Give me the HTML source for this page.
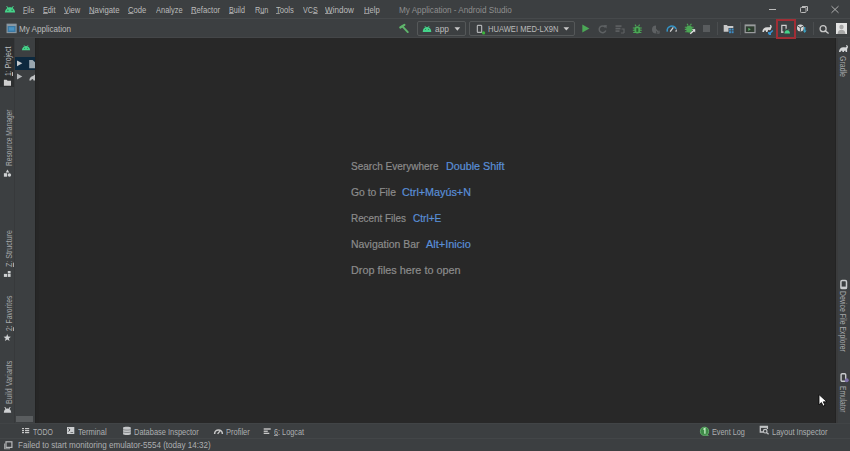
<!DOCTYPE html>
<html><head><meta charset="utf-8">
<style>
*{margin:0;padding:0;box-sizing:border-box}
html,body{width:850px;height:451px;overflow:hidden;background:#3c3f41;font-family:"Liberation Sans",sans-serif;color:#bbbbbb}
.abs{position:absolute}
.t{position:absolute;white-space:nowrap;transform-origin:0 0}
.hs{-webkit-text-stroke:0.2px currentColor}
.t u{text-decoration:underline;text-underline-offset:0px;text-decoration-thickness:1px;text-decoration-color:rgba(187,187,187,0.7)}
.v{position:absolute;width:0;height:0;transform-origin:0 0;white-space:nowrap}
.v u{text-decoration:underline;text-decoration-thickness:1px}
svg{position:absolute;overflow:visible}
</style></head><body>
<div class="abs" style="left:0;top:0;width:850px;height:18px;background:#3c3f41"></div>
<div class="abs" style="left:0;top:18px;width:850px;height:1px;background:#46494b"></div>
<div class="abs" style="left:0;top:19px;width:850px;height:19px;background:#3c3f41"></div>
<div class="abs" style="left:0;top:37px;width:850px;height:1px;background:#444648"></div>
<!-- left strip -->
<div class="abs" style="left:0;top:38px;width:15px;height:385px;background:#3c3f41"></div>
<div class="abs" style="left:0;top:38px;width:15px;height:49px;background:#2d2f30"></div>
<div class="abs" style="left:14px;top:38px;width:1px;height:385px;background:#37393b"></div>
<!-- project panel -->
<div class="abs" style="left:15px;top:38px;width:20px;height:385px;background:#3c3f41"></div>
<div class="abs" style="left:15px;top:57px;width:20px;height:13px;background:#0d293e"></div>
<div class="abs" style="left:16px;top:416px;width:17px;height:6px;background:#5a5d5f"></div>
<!-- editor -->
<div class="abs" style="left:35px;top:38px;width:800px;height:385px;background:#282828"></div>
<div class="abs" style="left:35px;top:38px;width:1px;height:385px;background:#222222"></div>
<div class="abs" style="left:36px;top:38px;width:3px;height:385px;background:#262626"></div>
<!-- right strip -->
<div class="abs" style="left:835px;top:38px;width:15px;height:385px;background:#3c3f41"></div>
<div class="abs" style="left:835px;top:38px;width:1px;height:385px;background:#232323"></div>
<div class="abs" style="left:836px;top:38px;width:2px;height:385px;background:#3a3b3c"></div>
<!-- bottom -->
<div class="abs" style="left:0;top:423px;width:850px;height:15px;background:#3c3f41"></div>
<div class="abs" style="left:0;top:438px;width:850px;height:13px;background:#3c3f41"></div>
<div class="abs" style="left:0;top:438px;width:850px;height:1px;background:#434648"></div>
<div class="abs" style="left:0;top:423px;width:850px;height:1px;background:#414446"></div>
<!-- android logo menubar -->
<svg style="left:0;top:0" width="20" height="18" viewBox="0 0 20 18">
 <path d="M4.9 12.6 C5.1 9.2 7.4 7.3 10 7.3 C12.6 7.3 14.9 9.2 15.1 12.6 Z" fill="#45d38a"/>
 <path d="M6.6 6 L7.9 8.2 M13.4 6 L12.1 8.2" stroke="#45d38a" stroke-width="0.9"/>
 <circle cx="7.9" cy="10.3" r="0.7" fill="#2e6e4a"/><circle cx="12.1" cy="10.3" r="0.7" fill="#2e6e4a"/>
</svg>
<!-- window controls -->
<div class="abs" style="left:769px;top:9px;width:7px;height:1px;background:#bbbbbb"></div>
<svg style="left:800px;top:6px" width="9" height="7" viewBox="0 0 9 7">
 <rect x="0.5" y="1.5" width="5.5" height="5" fill="none" stroke="#bbbbbb" stroke-width="1" rx="0.8"/>
 <path d="M2 0.5 H7.5 V5" fill="none" stroke="#bbbbbb" stroke-width="1"/>
</svg>
<svg style="left:831px;top:6px" width="8" height="7" viewBox="0 0 8 7">
 <path d="M0.5 0.2 L7.5 6.8 M7.5 0.2 L0.5 6.8" stroke="#bbbbbb" stroke-width="0.9"/>
</svg>
<!-- project window icon in toolbar -->
<svg style="left:6px;top:23px" width="11" height="10" viewBox="0 0 11 10">
 <rect x="1.1" y="1.2" width="9" height="8.4" fill="#3a78a3" stroke="#8d9aa3" stroke-width="1.1"/>
 <rect x="1.1" y="1.2" width="9" height="1.8" fill="#8d9aa3"/>
 <rect x="3" y="4.2" width="5.2" height="3.4" fill="#4a93c2"/>
</svg>
<!-- hammer -->
<svg style="left:399px;top:24px" width="11" height="10" viewBox="0 0 11 10">
 <path d="M1.3 3.5 L5.4 0.8" stroke="#5fb56c" stroke-width="2.2" stroke-linecap="round"/>
 <path d="M3.4 2.3 L8.8 8.1" stroke="#5fb56c" stroke-width="1.9" stroke-linecap="round"/>
</svg>
<!-- app combo -->
<div class="abs" style="left:417px;top:21px;width:49px;height:15px;border:1px solid #555859;border-radius:2px"></div>
<svg style="left:422px;top:25px" width="10" height="8" viewBox="0 0 10 8">
 <path d="M0.7 6.9 C0.8 3.9 2.6 2.1 5 2.1 C7.4 2.1 9.2 3.9 9.3 6.9 Z" fill="#45d38a"/>
 <path d="M2.9 1 L3.6 2.3 M7.1 1 L6.4 2.3" stroke="#45d38a" stroke-width="0.8"/>
 <circle cx="3.5" cy="4.6" r="0.5" fill="#2e6e4a"/><circle cx="6.5" cy="4.6" r="0.5" fill="#2e6e4a"/>
</svg>
<svg style="left:454px;top:27px" width="7" height="4" viewBox="0 0 7 4"><path d="M0.5 0.3 H6.2 L3.35 3.7 Z" fill="#c9c9c9"/></svg>
<!-- device combo -->
<div class="abs" style="left:469px;top:21px;width:106px;height:15px;border:1px solid #555859;border-radius:2px"></div>
<svg style="left:476px;top:24px" width="10" height="11" viewBox="0 0 10 11">
 <rect x="1.35" y="1.4" width="4.3" height="7" rx="0.6" fill="none" stroke="#afb1b3" stroke-width="1.2"/>
 <circle cx="7.6" cy="8.9" r="1.6" fill="#3cb53c"/>
</svg>
<svg style="left:563px;top:27px" width="7" height="4" viewBox="0 0 7 4"><path d="M0.5 0.2 H6.2 L3.35 3.5 Z" fill="#c9c9c9"/></svg>
<!-- run -->
<svg style="left:582px;top:24px" width="8" height="9" viewBox="0 0 8 9"><path d="M0.3 0.5 L7.4 4.6 L0.3 8.6 Z" fill="#4ba756"/></svg>
<!-- rerun gray -->
<svg style="left:598px;top:24px" width="10" height="10" viewBox="0 0 10 10">
 <path d="M7.3 3.2 A3.4 3.4 0 1 0 7.8 6.5" fill="none" stroke="#5e6163" stroke-width="1.5"/>
 <path d="M5.2 1.2 L8.8 0.9 L8.5 4.5 Z" fill="#5e6163"/>
</svg>
<!-- apply changes gray -->
<svg style="left:615px;top:25px" width="10" height="9" viewBox="0 0 10 9">
 <rect x="0.5" y="0.3" width="6" height="1.6" fill="#5e6163"/>
 <rect x="0.5" y="2.8" width="5" height="1.6" fill="#5e6163"/>
 <rect x="0.5" y="5.3" width="4" height="1.6" fill="#5e6163"/>
 <path d="M6.5 4 L9 4 L9 8 M6 8 L9 8" stroke="#5e6163" stroke-width="1.2" fill="none"/>
</svg>
<!-- debug bug green -->
<svg style="left:632px;top:24px" width="11" height="10" viewBox="0 0 11 10">
 <ellipse cx="5.3" cy="5.8" rx="3" ry="3.6" fill="#4ba756"/>
 <path d="M0.8 4 H9.8 M0.8 6.2 H9.8 M1.2 8.5 H9.4 M3 0.6 L4 2.2 M7.6 0.6 L6.6 2.2" stroke="#4ba756" stroke-width="1.1"/>
 <rect x="4.3" y="4.2" width="2" height="3.6" fill="#2a5c30"/>
</svg>
<!-- attach debugger gray -->
<svg style="left:650px;top:25px" width="10" height="9" viewBox="0 0 10 9">
 <path d="M6 0.5 A4 4 0 1 0 6 8.5 Z" fill="#5e6163"/>
 <path d="M4 2.5 L8.5 7.5" stroke="#5e6163" stroke-width="1.3"/>
 <path d="M6.5 8 L9.2 8.3 L9 5.6" stroke="#5e6163" stroke-width="1" fill="none"/>
</svg>
<!-- profiler gauge -->
<svg style="left:666px;top:24px" width="12" height="9" viewBox="0 0 12 9">
 <path d="M1.3 7.6 A4.6 4.6 0 0 1 10.1 5" fill="none" stroke="#3592c4" stroke-width="1.6"/>
 <path d="M4.2 7.6 L7.3 3.3" stroke="#d5d5d5" stroke-width="1.3"/>
 <path d="M9.1 7.6 L10.4 4.9 L11 7.6 Z" fill="#d5d5d5"/>
</svg>
<!-- bug with arrow -->
<svg style="left:684px;top:23px" width="12" height="12" viewBox="0 0 12 12">
 <ellipse cx="5.2" cy="6" rx="3" ry="3.6" fill="#4ba756"/>
 <path d="M0.8 4.2 H9.6 M0.8 6.4 H9.6 M1.2 8.8 H8.5 M3 0.8 L4 2.4 M7.4 0.8 L6.4 2.4" stroke="#4ba756" stroke-width="1.1"/>
 <path d="M6.2 10.8 L10.8 6.8" stroke="#e0e0e0" stroke-width="1.4"/>
 <path d="M8 6.3 L11.2 6.3 L11.2 9.5 Z" fill="#e0e0e0"/>
</svg>
<!-- stop -->
<div class="abs" style="left:703px;top:25px;width:7px;height:7px;background:#595c5e"></div>
<!-- separators -->
<div class="abs" style="left:717px;top:22px;width:1px;height:13px;background:#4a4d4f"></div>
<div class="abs" style="left:740px;top:22px;width:1px;height:13px;background:#4a4d4f"></div>
<div class="abs" style="left:813px;top:22px;width:1px;height:13px;background:#4a4d4f"></div>
<!-- project structure -->
<svg style="left:723px;top:24px" width="12" height="10" viewBox="0 0 12 10">
 <path d="M0.7 1 H3.8 L4.8 2 H10.3 V7.8 H0.7 Z" fill="#c8c8c8"/>
 <rect x="5.5" y="4" width="5.5" height="5.5" fill="#3c3f41"/>
 <rect x="6" y="4.5" width="2" height="2" fill="#3d8ac2"/><rect x="8.6" y="4.5" width="2" height="2" fill="#3d8ac2"/>
 <rect x="6" y="7.2" width="2" height="2" fill="#3d8ac2"/><rect x="8.6" y="7.2" width="2" height="2" fill="#3d8ac2"/>
</svg>
<!-- console window -->
<svg style="left:744px;top:24px" width="12" height="10" viewBox="0 0 12 10">
 <rect x="1.2" y="1" width="9.8" height="7.6" fill="#2f3d30" stroke="#9a9c9e" stroke-width="1.2"/>
 <rect x="1.2" y="1" width="9.8" height="1.3" fill="#9a9c9e"/>
 <path d="M4.3 3.7 L6.8 5.3 L4.3 6.9 Z" fill="#5cad6a"/>
</svg>
<!-- gradle sync elephant w/ arrow -->
<svg style="left:762px;top:24px" width="12" height="11" viewBox="0 0 12 11">
 <path d="M0.4 8 C0.4 5 2.4 3.2 5 3.2 C6.5 3.2 7.4 3.5 8 2.9 C8.5 2.4 8.3 1.6 7.7 1.7 L8.1 0.7 C9.8 0.8 10.3 2.9 9.2 4.2 C8.9 4.6 8.8 5.3 8.8 5.8 L7.3 6.3 L6.2 5.7 L5.4 8 H4 L3.9 6.6 L2.4 6.6 L2 8 Z" fill="#d8d8d8"/>
 <path d="M6.8 10.3 L10.8 6.6 M6.8 10.3 V8 M6.8 10.3 H9" stroke="#3a9ad9" stroke-width="1.4" fill="none"/>
</svg>
<!-- red box -->
<div class="abs" style="left:776px;top:19px;width:20px;height:20px;border:2px solid #a02e35"></div>
<!-- device manager -->
<svg style="left:780px;top:24px" width="12" height="11" viewBox="0 0 12 11">
 <path d="M3.6 8.1 H1.8 V1.3 H6.1 V4.8" fill="none" stroke="#d0d0d0" stroke-width="1.2"/>
 <circle cx="2" cy="8.2" r="0.8" fill="#d0d0d0"/>
 <path d="M4.4 9.4 C4.6 7.5 5.8 6.3 7.2 6.3 C8.6 6.3 9.8 7.5 10 9.4 Z" fill="#45d38a"/>
 <path d="M5.6 5.5 L6.2 6.5 M8.8 5.5 L8.2 6.5" stroke="#45d38a" stroke-width="0.7"/>
</svg>
<!-- sdk manager -->
<svg style="left:796px;top:24px" width="12" height="11" viewBox="0 0 12 11">
 <circle cx="4.4" cy="3.9" r="3.4" fill="#d8d8d8"/>
 <path d="M4.4 3.6 V7 M1.8 2.2 L4.4 3.7 L7 2.2" stroke="#3c3f41" stroke-width="0.9" fill="none"/>
 <path d="M8.7 3 V8" stroke="#3a9fc0" stroke-width="1.4"/>
 <path d="M6.8 6.6 L8.7 9 L10.6 6.6 Z" fill="#3a9fc0"/>
</svg>
<!-- search -->
<svg style="left:819px;top:25px" width="11" height="9" viewBox="0 0 11 9">
 <circle cx="4.1" cy="3.7" r="3" fill="none" stroke="#c8c8c8" stroke-width="1.3"/>
 <path d="M6.3 5.9 L9.6 8.5" stroke="#c8c8c8" stroke-width="1.4"/>
</svg>
<!-- avatar -->
<svg style="left:836px;top:23px" width="11" height="11" viewBox="0 0 11 11">
 <rect x="0" y="0" width="11" height="11" fill="#e3e3e3"/>
 <circle cx="5.5" cy="4" r="2.2" fill="#a8a8a8"/>
 <path d="M1.5 11 C1.8 8 3.4 6.8 5.5 6.8 C7.6 6.8 9.2 8 9.5 11 Z" fill="#a8a8a8"/>
</svg>

<!-- left strip folder (1: Project) -->
<svg style="left:3px;top:79px" width="9" height="8" viewBox="0 0 9 8">
 <path d="M0.9 0.8 H3.6 L4.6 1.8 H8 V6.8 H0.9 Z" fill="#cfcfcf"/>
</svg>
<!-- resource manager -->
<svg style="left:3px;top:169px" width="9" height="9" viewBox="0 0 9 9">
 <path d="M4.5 0.5 L6.3 3.4 H2.7 Z" fill="#cfd1d3"/>
 <rect x="0.9" y="4.2" width="3.2" height="3.5" fill="#cfd1d3"/>
 <circle cx="6.4" cy="5.95" r="1.7" fill="#cfd1d3"/>
</svg>
<!-- structure -->
<svg style="left:3px;top:270px" width="9" height="8" viewBox="0 0 9 8">
 <rect x="4.8" y="1" width="2.8" height="2.4" fill="#cfd1d3"/>
 <rect x="0.9" y="3.9" width="3.2" height="3" fill="#cfd1d3"/>
 <rect x="4.8" y="3.9" width="2.8" height="3" fill="#cfd1d3"/>
</svg>
<!-- star -->
<svg style="left:3px;top:333px" width="9" height="9" viewBox="0 0 9 9">
 <path d="M4.25 1.1 L5.2 3.6 L7.9 3.7 L5.8 5.4 L6.6 8.1 L4.25 6.6 L1.9 8.1 L2.7 5.4 L0.6 3.7 L3.3 3.6 Z" fill="#cfd1d3"/>
</svg>
<!-- build variants -->
<svg style="left:3px;top:406px" width="9" height="8" viewBox="0 0 9 8">
 <path d="M0.8 6.8 C1 4 2.5 2.6 4.5 2.6 C6.5 2.6 8 4 8.2 6.8 Z" fill="#cfd1d3"/>
 <path d="M1.8 1 L2.9 3 M7.2 1 L6.1 3" stroke="#cfd1d3" stroke-width="1"/>
</svg>
<!-- project panel: android, triangles, file, gradle -->
<svg style="left:21px;top:44px" width="10" height="7" viewBox="0 0 10 7">
 <path d="M0.9 6.2 C1.1 3.6 2.6 1.9 5 1.9 C7.4 1.9 8.9 3.6 9.1 6.2 Z" fill="#45d38a"/>
 <path d="M3 1.2 L3.6 2.2 M7 1.2 L6.4 2.2" stroke="#45d38a" stroke-width="0.7"/>
 <circle cx="3.6" cy="4.2" r="0.5" fill="#2e6e4a"/><circle cx="6.4" cy="4.2" r="0.5" fill="#2e6e4a"/>
</svg>
<svg style="left:17px;top:60px" width="6" height="7" viewBox="0 0 6 7"><path d="M0 0.4 L5.3 3.3 L0 6.3 Z" fill="#c5c9cc"/></svg>
<svg style="left:17px;top:73px" width="6" height="7" viewBox="0 0 6 7"><path d="M0 0.6 L5.3 3.5 L0 6.5 Z" fill="#b3b6b8"/></svg>
<svg style="left:29px;top:60px" width="6" height="9" viewBox="0 0 6 9"><path d="M0.2 0 H3.6 L6 2.3 V8.2 H0.2 Z" fill="#9aa7b0"/></svg>
<svg style="left:29px;top:74px" width="6" height="7" viewBox="0 0 6 7"><path d="M0.3 6.5 C0.5 4 1.8 2.3 4 2 L6 0.5 V6.5 H4.5 L4 5 L2.5 5.5 L2 6.5 Z" fill="#bfc1c3"/></svg>
<!-- right strip: gradle elephant -->
<svg style="left:838px;top:44px" width="11" height="9" viewBox="0 0 11 9">
 <path d="M1 8 C1 5.2 2.9 3.3 5.4 3.3 C6.8 3.3 7.7 3.6 8.3 3 C8.8 2.5 8.6 1.8 8 1.9 L8.4 0.9 C10 1 10.5 3 9.5 4.3 C9.2 4.7 9.1 5.4 9.1 6 V8 H7.7 L7.3 6.6 L6.1 6.9 L5.9 8 H4.5 L4.3 6.8 L2.9 6.8 L2.6 8 Z" fill="#d5d7d9"/>
</svg>
<!-- device file explorer icon -->
<svg style="left:839px;top:279px" width="9" height="11" viewBox="0 0 9 11">
 <rect x="1.9" y="1.6" width="5.6" height="8" rx="1.2" fill="none" stroke="#c8cacc" stroke-width="1.5"/>
 <rect x="1.9" y="7.6" width="5.6" height="2" fill="#c8cacc"/>
</svg>
<!-- emulator icon -->
<svg style="left:839px;top:372px" width="11" height="12" viewBox="0 0 11 12">
 <rect x="2.1" y="1.7" width="4.6" height="7.6" rx="1.1" fill="none" stroke="#c8cacc" stroke-width="1.4"/>
 <circle cx="7.7" cy="8.3" r="2" fill="#7d70a8"/>
</svg>
<!-- bottom: TODO -->
<svg style="left:21px;top:427px" width="10" height="8" viewBox="0 0 10 8">
 <rect x="1" y="1" width="2" height="1.2" fill="#c8c8c8"/><rect x="4" y="1" width="4.2" height="1.2" fill="#c8c8c8"/>
 <rect x="1" y="3" width="2" height="1.2" fill="#c8c8c8"/><rect x="4" y="3" width="4.2" height="1.2" fill="#c8c8c8"/>
 <rect x="1" y="5" width="2" height="1.2" fill="#c8c8c8"/><rect x="4" y="5" width="4.2" height="1.2" fill="#c8c8c8"/>
</svg>
<!-- terminal -->
<svg style="left:66px;top:426px" width="10" height="9" viewBox="0 0 10 9">
 <rect x="1" y="1" width="7.3" height="7" fill="#cbcdcf"/>
 <path d="M2.4 2.3 L4 3.9 L2.4 5.5" stroke="#3c3f41" stroke-width="1" fill="none"/>
 <rect x="4.5" y="6" width="2.6" height="0.9" fill="#6a6d70"/>
</svg>
<!-- database -->
<svg style="left:122px;top:426px" width="10" height="10" viewBox="0 0 10 10">
 <path d="M1.1 1.6 C1.1 0.5 8.8 0.5 8.8 1.6 V8.2 C8.8 9.3 1.1 9.3 1.1 8.2 Z" fill="#c5c7c9"/>
 <path d="M1.1 3.6 C3 4.3 7 4.3 8.8 3.6 M1.1 6 C3 6.7 7 6.7 8.8 6" stroke="#6b6e70" stroke-width="0.7" fill="none"/>
</svg>
<!-- profiler -->
<svg style="left:213px;top:427px" width="11" height="8" viewBox="0 0 11 8">
 <path d="M1.6 6.9 A3.9 3.9 0 0 1 9.4 6.9" fill="none" stroke="#c8c8c8" stroke-width="1.5"/>
 <path d="M4.6 6.9 L7.3 3.6" stroke="#c8c8c8" stroke-width="1.4"/>
</svg>
<!-- logcat -->
<svg style="left:263px;top:427px" width="9" height="8" viewBox="0 0 9 8">
 <rect x="0.7" y="1.3" width="7" height="1.4" fill="#c8c8c8"/>
 <rect x="0.7" y="3.6" width="4.1" height="1.3" fill="#c8c8c8"/>
 <rect x="0.7" y="5.7" width="5.6" height="1.3" fill="#c8c8c8"/>
</svg>
<!-- event log -->
<svg style="left:699px;top:426px" width="11" height="11" viewBox="0 0 11 11">
 <circle cx="5.5" cy="5.3" r="4.1" fill="#3e8a47" stroke="#62b36b" stroke-width="0.9"/>
 <path d="M8.4 8.2 L10 10 L6.6 9.5 Z" fill="#62b36b"/>
 <path d="M4.4 3.3 L5.9 2.6 V7.8" stroke="#c9f2c9" stroke-width="1.3" fill="none"/>
</svg>
<!-- layout inspector -->
<svg style="left:759px;top:425px" width="11" height="10" viewBox="0 0 11 10">
 <path d="M4.5 7 H1.3 V1.3 H8.4 V4" fill="none" stroke="#c0c2c4" stroke-width="1.3"/>
 <rect x="1.3" y="1.3" width="7.1" height="1.6" fill="#c0c2c4"/>
 <circle cx="6.2" cy="6.2" r="1.8" fill="none" stroke="#c0c2c4" stroke-width="1.2"/>
 <path d="M7.4 7.5 L9.6 9.2" stroke="#c0c2c4" stroke-width="1.3"/>
</svg>
<!-- status icon -->
<svg style="left:3px;top:440px" width="11" height="11" viewBox="0 0 11 11">
 <rect x="3" y="1.8" width="5.9" height="5.6" fill="none" stroke="#b8babc" stroke-width="1.2"/>
 <path d="M1.6 3.5 V8.8 H7" fill="none" stroke="#9fa1a3" stroke-width="1.1"/>
</svg>
<!-- mouse cursor -->
<svg style="left:818px;top:394px" width="11" height="13" viewBox="0 0 11 13">
 <path d="M1 0.6 V10.8 L3.4 8.5 L5.1 12.1 L7 11.3 L5.3 7.8 L8.9 7.8 Z" fill="#ffffff" stroke="#000000" stroke-width="0.8" stroke-linejoin="round"/>
</svg>

<!--ICONS-->
<div class="t" style="left:23.40px;top:6.04px;font-size:8.7px;line-height:8.7px;color:#bbbbbb;transform:scaleX(0.8047)"><u>F</u>ile</div>
<div class="t" style="left:42.60px;top:6.04px;font-size:8.7px;line-height:8.7px;color:#bbbbbb;transform:scaleX(0.8293)"><u>E</u>dit</div>
<div class="t" style="left:64.00px;top:6.04px;font-size:8.7px;line-height:8.7px;color:#bbbbbb;transform:scaleX(0.8660)"><u>V</u>iew</div>
<div class="t" style="left:88.90px;top:6.04px;font-size:8.7px;line-height:8.7px;color:#bbbbbb;transform:scaleX(0.8910)"><u>N</u>avigate</div>
<div class="t" style="left:128.00px;top:6.04px;font-size:8.7px;line-height:8.7px;color:#bbbbbb;transform:scaleX(0.8788)"><u>C</u>ode</div>
<div class="t" style="left:155.60px;top:6.04px;font-size:8.7px;line-height:8.7px;color:#bbbbbb;transform:scaleX(0.8592)">Analyze</div>
<div class="t" style="left:190.70px;top:6.04px;font-size:8.7px;line-height:8.7px;color:#bbbbbb;transform:scaleX(0.8834)"><u>R</u>efactor</div>
<div class="t" style="left:229.00px;top:6.04px;font-size:8.7px;line-height:8.7px;color:#bbbbbb;transform:scaleX(0.8211)"><u>B</u>uild</div>
<div class="t" style="left:254.80px;top:6.04px;font-size:8.7px;line-height:8.7px;color:#bbbbbb;transform:scaleX(0.8382)">R<u>u</u>n</div>
<div class="t" style="left:276.20px;top:6.04px;font-size:8.7px;line-height:8.7px;color:#bbbbbb;transform:scaleX(0.8741)"><u>T</u>ools</div>
<div class="t" style="left:303.20px;top:6.04px;font-size:8.7px;line-height:8.7px;color:#bbbbbb;transform:scaleX(0.8191)">VC<u>S</u></div>
<div class="t" style="left:325.40px;top:6.04px;font-size:8.7px;line-height:8.7px;color:#bbbbbb;transform:scaleX(0.9297)"><u>W</u>indow</div>
<div class="t" style="left:363.60px;top:6.04px;font-size:8.7px;line-height:8.7px;color:#bbbbbb;transform:scaleX(0.8761)"><u>H</u>elp</div>
<div class="t" style="left:399.20px;top:6.04px;font-size:8.7px;line-height:8.7px;color:#8e8e8e;transform:scaleX(0.9384)">My Application - Android Studio</div>
<div class="t" style="left:18.80px;top:25.24px;font-size:8.7px;line-height:8.7px;color:#bbbbbb;transform:scaleX(0.9301)">My Application</div>
<div class="t" style="left:435.00px;top:25.14px;font-size:8.7px;line-height:8.7px;color:#bbbbbb;transform:scaleX(0.9616)">app</div>
<div class="t" style="left:488.00px;top:25.14px;font-size:8.7px;line-height:8.7px;color:#bbbbbb;transform:scaleX(0.8721)">HUAWEI MED-LX9N</div>
<div class="t hs" style="left:350.60px;top:160.89px;font-size:11px;line-height:11px;color:#8c8c8c;transform:scaleX(0.9117)">Search Everywhere</div>
<div class="t hs" style="left:445.50px;top:160.89px;font-size:11px;line-height:11px;color:#5a8fd8;transform:scaleX(0.9771)">Double Shift</div>
<div class="t hs" style="left:350.60px;top:186.89px;font-size:11px;line-height:11px;color:#8c8c8c;transform:scaleX(0.9418)">Go to File</div>
<div class="t hs" style="left:402.00px;top:186.89px;font-size:11px;line-height:11px;color:#5a8fd8;transform:scaleX(0.9808)">Ctrl+Mayús+N</div>
<div class="t hs" style="left:350.90px;top:212.89px;font-size:11px;line-height:11px;color:#8c8c8c;transform:scaleX(0.8972)">Recent Files</div>
<div class="t hs" style="left:413.00px;top:212.89px;font-size:11px;line-height:11px;color:#5a8fd8;transform:scaleX(0.9138)">Ctrl+E</div>
<div class="t hs" style="left:351.10px;top:238.89px;font-size:11px;line-height:11px;color:#8c8c8c;transform:scaleX(0.9491)">Navigation Bar</div>
<div class="t hs" style="left:426.00px;top:238.89px;font-size:11px;line-height:11px;color:#5a8fd8;transform:scaleX(0.9973)">Alt+Inicio</div>
<div class="t hs" style="left:350.60px;top:264.89px;font-size:11px;line-height:11px;color:#8c8c8c;transform:scaleX(0.9841)">Drop files here to open</div>
<div class="t" style="left:33.10px;top:427.64px;font-size:8.7px;line-height:8.7px;color:#adafb1;transform:scaleX(0.7982)">TODO</div>
<div class="t" style="left:78.40px;top:427.64px;font-size:8.7px;line-height:8.7px;color:#adafb1;transform:scaleX(0.8724)">Terminal</div>
<div class="t" style="left:134.40px;top:427.64px;font-size:8.7px;line-height:8.7px;color:#adafb1;transform:scaleX(0.8576)">Database Inspector</div>
<div class="t" style="left:225.70px;top:427.64px;font-size:8.7px;line-height:8.7px;color:#adafb1;transform:scaleX(0.8652)">Profiler</div>
<div class="t" style="left:274.20px;top:427.64px;font-size:8.7px;line-height:8.7px;color:#adafb1;transform:scaleX(0.8396)"><u>6</u>: Logcat</div>
<div class="t" style="left:711.60px;top:427.64px;font-size:8.7px;line-height:8.7px;color:#adafb1;transform:scaleX(0.8399)">Event Log</div>
<div class="t" style="left:771.90px;top:427.64px;font-size:8.7px;line-height:8.7px;color:#adafb1;transform:scaleX(0.8626)">Layout Inspector</div>
<div class="t" style="left:18.10px;top:441.24px;font-size:8.7px;line-height:8.7px;color:#adafb1;transform:scaleX(0.9280)">Failed to start monitoring emulator-5554 (today 14:32)</div>
<div class="v" style="left:11.30px;top:75.90px;transform:rotate(-90deg) scaleX(0.8366)"><div style="position:absolute;left:0;top:-7.03px;font-size:8.3px;line-height:8.3px;color:#bdbfc1"><u>1</u>: Project</div></div>
<div class="v" style="left:12.00px;top:165.50px;transform:rotate(-90deg) scaleX(0.8009)"><div style="position:absolute;left:0;top:-7.03px;font-size:8.3px;line-height:8.3px;color:#a6a8aa">Resource Manager</div></div>
<div class="v" style="left:11.60px;top:267.30px;transform:rotate(-90deg) scaleX(0.8530)"><div style="position:absolute;left:0;top:-7.03px;font-size:8.3px;line-height:8.3px;color:#a6a8aa"><u>Z</u>: Structure</div></div>
<div class="v" style="left:11.50px;top:331.00px;transform:rotate(-90deg) scaleX(0.8149)"><div style="position:absolute;left:0;top:-7.03px;font-size:8.3px;line-height:8.3px;color:#a6a8aa"><u>2</u>: Favorites</div></div>
<div class="v" style="left:11.60px;top:404.00px;transform:rotate(-90deg) scaleX(0.8567)"><div style="position:absolute;left:0;top:-7.03px;font-size:8.3px;line-height:8.3px;color:#a6a8aa">Build Variants</div></div>
<div class="v" style="left:840.30px;top:56.00px;transform:rotate(90deg) scaleX(0.8423)"><div style="position:absolute;left:0;top:-7.03px;font-size:8.3px;line-height:8.3px;color:#a6a8aa">Gradle</div></div>
<div class="v" style="left:840.30px;top:291.00px;transform:rotate(90deg) scaleX(0.8191)"><div style="position:absolute;left:0;top:-7.03px;font-size:8.3px;line-height:8.3px;color:#a6a8aa">Device File Explorer</div></div>
<div class="v" style="left:840.30px;top:386.00px;transform:rotate(90deg) scaleX(0.7955)"><div style="position:absolute;left:0;top:-7.03px;font-size:8.3px;line-height:8.3px;color:#a6a8aa">Emulator</div></div>
</body></html>
